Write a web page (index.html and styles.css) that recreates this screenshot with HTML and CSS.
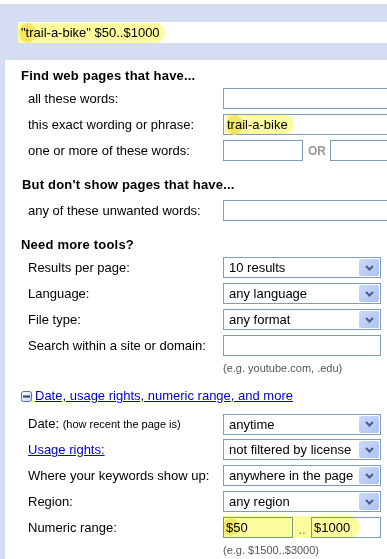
FILE: index.html
```html
<!DOCTYPE html>
<html>
<head>
<meta charset="utf-8">
<title>Advanced Search</title>
<link rel="stylesheet" href="styles.css">
</head>
<body>
<div class="topbar">
  <div class="query"><span class="hl">"trail-a-bike" $50..$1000</span></div>
</div>
<div class="panel">
  <h2 class="head head-find">Find web pages that have...</h2>
  <div class="rows">
    <div class="row"><span class="label">all these words:</span><div class="input wide"></div></div>
    <div class="row"><span class="label">this exact wording or phrase:</span><div class="input wide"><span class="hl hl-in">trail-a-bike</span></div></div>
    <div class="row"><span class="label">one or more of these words:</span>
      <div class="pair"><div class="input short"></div><span class="or">OR</span><div class="input wide"></div></div>
    </div>
  </div>

  <h2 class="head head-not">But don't show pages that have...</h2>
  <div class="rows">
    <div class="row"><span class="label">any of these unwanted words:</span><div class="input wide"></div></div>
  </div>

  <h2 class="head head-tools">Need more tools?</h2>
  <div class="rows">
    <div class="row"><span class="label">Results per page:</span><div class="select"><span class="sel-text">10 results</span><span class="arrow"><svg width="9" height="6" viewBox="0 0 9 6"><path d="M1 1 L4.5 4.5 L8 1" fill="none" stroke="#4b5c85" stroke-width="2"/></svg></span></div></div>
    <div class="row"><span class="label">Language:</span><div class="select"><span class="sel-text">any language</span><span class="arrow"><svg width="9" height="6" viewBox="0 0 9 6"><path d="M1 1 L4.5 4.5 L8 1" fill="none" stroke="#4b5c85" stroke-width="2"/></svg></span></div></div>
    <div class="row"><span class="label">File type:</span><div class="select"><span class="sel-text">any format</span><span class="arrow"><svg width="9" height="6" viewBox="0 0 9 6"><path d="M1 1 L4.5 4.5 L8 1" fill="none" stroke="#4b5c85" stroke-width="2"/></svg></span></div></div>
    <div class="row"><span class="label">Search within a site or domain:</span><div class="input site"></div></div>
  </div>
  <div class="hint hint-site">(e.g. youtube.com, .edu)</div>

  <div class="more">
    <svg class="minus" width="11" height="11" viewBox="0 0 11 11"><defs><linearGradient id="mg" x1="0" y1="0" x2="1" y2="1"><stop offset="0" stop-color="#ffffff"/><stop offset="1" stop-color="#c8d4ec"/></linearGradient></defs><rect x="0.5" y="0.5" width="10" height="10" rx="2" fill="url(#mg)" stroke="#5a6e98"/><rect x="2" y="4.5" width="7" height="2" fill="#1c3a8c"/></svg>
    <a class="link" href="#">Date, usage rights, numeric range, and more</a>
  </div>
  <div class="rows">
    <div class="row"><span class="label">Date: <span class="small">(how recent the page is)</span></span><div class="select"><span class="sel-text">anytime</span><span class="arrow"><svg width="9" height="6" viewBox="0 0 9 6"><path d="M1 1 L4.5 4.5 L8 1" fill="none" stroke="#4b5c85" stroke-width="2"/></svg></span></div></div>
    <div class="row"><span class="label"><a class="link" href="#">Usage rights:</a></span><div class="select"><span class="sel-text">not filtered by license</span><span class="arrow"><svg width="9" height="6" viewBox="0 0 9 6"><path d="M1 1 L4.5 4.5 L8 1" fill="none" stroke="#4b5c85" stroke-width="2"/></svg></span></div></div>
    <div class="row"><span class="label">Where your keywords show up:</span><div class="select"><span class="sel-text">anywhere in the page</span><span class="arrow"><svg width="9" height="6" viewBox="0 0 9 6"><path d="M1 1 L4.5 4.5 L8 1" fill="none" stroke="#4b5c85" stroke-width="2"/></svg></span></div></div>
    <div class="row"><span class="label">Region:</span><div class="select"><span class="sel-text">any region</span><span class="arrow"><svg width="9" height="6" viewBox="0 0 9 6"><path d="M1 1 L4.5 4.5 L8 1" fill="none" stroke="#4b5c85" stroke-width="2"/></svg></span></div></div>
    <div class="row"><span class="label">Numeric range:</span>
      <div class="range">
        <div class="input num">$50</div><span class="dots">..</span><div class="input num">$1000</div>
        <span class="range-hl"></span>
      </div>
    </div>
  </div>
  <div class="hint hint-num">(e.g. $1500..$3000)</div>
</div>
</body>
</html>
```

FILE: styles.css
```css
html, body {
  margin: 0;
  padding: 0;
  overflow: hidden;
  background: #ffffff;
}
body {
  font-family: "Liberation Sans", Arial, sans-serif;
  font-size: 13px;
  color: #000;
  width: 387px;
  height: 559px;
}
.topbar {
  margin-top: 4px;
  background: #d5ddf3;
  padding: 18px 0 17px 18px;
  overflow: hidden;
}
.query {
  background: #fff;
  height: 21px;
  line-height: 21px;
  white-space: nowrap;
}
.hl {
  position: relative;
  display: inline-block;
  height: 20px;
  line-height: 20px;
  padding: 0 5px 0 3px;
  background: #fcfc9e;
  border-radius: 0 10px 10px 0;
  isolation: isolate;
}
.hl::before {
  content: "";
  position: absolute;
  left: 1px;
  top: 0;
  width: 17px;
  height: 20px;
  border-radius: 50%;
  background: #f1e765;
  z-index: -1;
}
.hl-in {
  padding: 0 6px 0 2px;
  height: 19px;
  line-height: 19px;
}
.panel {
  box-sizing: border-box;
  border-left: 5px solid #d5ddf3;
  padding: 8px 0 0 16px;
  overflow: hidden;
  height: 499px;
}
.head {
  margin: 0;
  font-size: 13px;
  font-weight: bold;
  line-height: 16px;
  letter-spacing: 0.2px;
  white-space: nowrap;
}
.head-find { margin-bottom: 4px; }
.head-not { margin: 16px 0 7px 1px; }
.head-tools { margin: 16px 0 4px 0; }
.rows {
  display: flex;
  flex-direction: column;
  gap: 5px;
}
.row {
  display: grid;
  grid-template-columns: 195px auto;
  align-items: center;
  height: 21px;
  padding-left: 7px;
  white-space: nowrap;
}
.label {
  line-height: 21px;
}
.small {
  font-size: 11px;
}
.input {
  box-sizing: border-box;
  height: 21px;
  border: 1px solid #7f9db9;
  background: #fff;
  line-height: 19px;
  padding-left: 1px;
  white-space: nowrap;
}
.wide { width: 200px; }
.short { width: 80px; }
.site { width: 158px; }
.pair {
  display: flex;
  align-items: center;
}
.or {
  color: #999;
  font-weight: bold;
  font-size: 12px;
  width: 27px;
  padding-left: 5px;
  box-sizing: border-box;
}
.select {
  box-sizing: border-box;
  width: 158px;
  height: 21px;
  border: 1px solid #7f9db9;
  background: #fff;
  display: flex;
  align-items: stretch;
}
.sel-text {
  flex: 1;
  padding-left: 5px;
  line-height: 19px;
  overflow: hidden;
}
.arrow {
  width: 20px;
  margin: 1px;
  background: linear-gradient(135deg, #cad9fd 0%, #b8cbf6 60%, #aec2f2 100%);
  border-radius: 2px;
  display: flex;
  align-items: center;
  justify-content: center;
}
.hint {
  font-size: 11px;
  color: #555;
  line-height: 14px;
  padding-left: 202px;
  white-space: nowrap;
}
.hint-site { margin-top: 5px; }
.hint-num { margin-top: 5px; }
.more {
  margin-top: 13px;
  margin-bottom: 9px;
  display: flex;
  align-items: center;
  gap: 3px;
  line-height: 16px;
  white-space: nowrap;
}
.minus { flex: none; }
.link {
  color: #0000cc;
  text-decoration: underline;
}
.range {
  position: relative;
  display: flex;
  align-items: center;
  width: 158px;
}
.num {
  width: 70px;
  padding-left: 2px;
}
.dots {
  width: 18px;
  text-align: center;
  color: #888;
  align-self: flex-end;
  line-height: 16px;
}
.range-hl {
  position: absolute;
  left: 0;
  top: -1px;
  width: 137px;
  height: 22px;
  border-radius: 0 11px 11px 0;
  background: radial-gradient(circle at 8px 11px, #f1e765 0, #f1e765 8px, #fcfc9e 9px);
  mix-blend-mode: multiply;
  pointer-events: none;
}
```
